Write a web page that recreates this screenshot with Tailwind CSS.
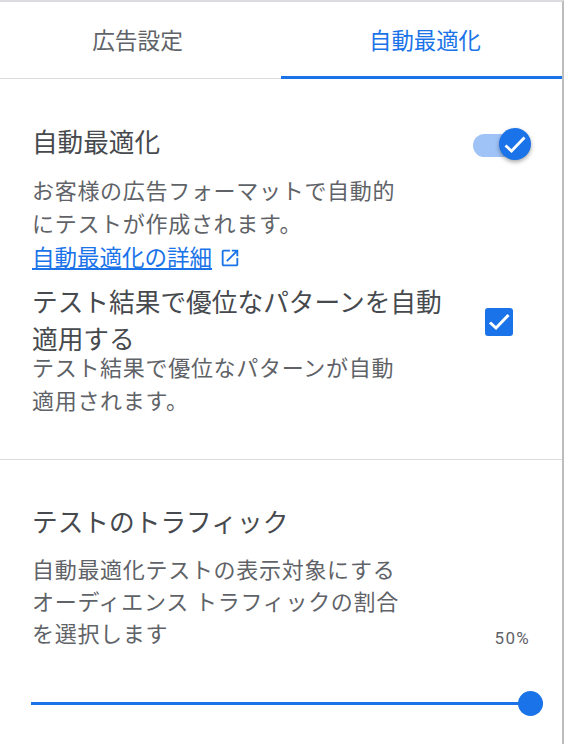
<!DOCTYPE html>
<html lang="ja"><head><meta charset="utf-8"><script src="https://cdn.jsdelivr.net/npm/@tailwindcss/browser@4"></script></head>
<body class="bg-white">
<div class="w-[564px] h-[744px] border-t-2 border-r-2 border-t-[#dadce0] border-r-[#bdbdbd] font-['Roboto','Noto_Sans_CJK_JP',sans-serif] text-[#5f6368] overflow-hidden">
  <div class="flex h-[77px] border-b border-[#dadce0]">
    <div class="w-[281px] pr-[6px] flex items-center justify-center text-[22.7px] pt-[4px] leading-[30px]">広告設定</div>
    <div class="w-[281px] pl-[7px] flex items-center justify-center text-[22.4px] pt-[4px] leading-[30px] text-[#1a73e8] border-b-[3px] border-[#1a73e8] h-[77px]">自動最適化</div>
  </div>
  <section class="h-[381px] border-b border-[#dadce0] pl-[32px] pr-[31px] pt-[46px]">
    <div class="flex justify-between items-center h-[36px]">
      <h2 class="text-[25.6px] leading-[36px] text-[#46494d]">自動最適化</h2>
      <div class="relative w-[58px] h-[34px] mt-[4px]">
        <div class="absolute left-0 top-[6px] w-[46px] h-[23px] rounded-full bg-[#a0c3f7]"></div>
        <div class="absolute right-0 top-0 w-[32px] h-[32px] rounded-full bg-[#1a73e8] shadow-[0_2px_4px_rgba(0,0,0,0.35)] flex items-center justify-center">
          <svg width="24" height="24" viewBox="0 0 24 24" fill="none" stroke="#fff" stroke-width="2.8"><path d="M2.5 13.5l6 5.5L21.5 5.5"/></svg>
        </div>
      </div>
    </div>
    <p class="mt-[14px] w-[372px] text-[22px] leading-[33px] tracking-[0.7px]">お客様の広告フォーマットで自動的にテストが作成されます。</p>
    <div class="flex items-center h-[33px] text-[#1a73e8]">
      <a class="text-[22.5px] leading-[30px] underline underline-offset-[2px]">自動最適化の詳細</a>
      <svg class="ml-[7px]" width="22" height="22" viewBox="0 0 24 24" fill="#1a73e8"><path d="M19 19H5V5h7V3H5c-1.1 0-2 .9-2 2v14c0 1.1.9 2 2 2h14c1.1 0 2-.9 2-2v-7h-2v7zM14 3v2h3.6l-9.8 9.8 1.4 1.4L19 6.4V10h2V3h-7z"/></svg>
    </div>
    <div class="flex justify-between items-center mt-[11px]">
      <h3 class="w-[420px] text-[25.7px] leading-[37px] text-[#46494d]">テスト結果で優位なパターンを自動適用する</h3>
      <div class="w-[28px] h-[28px] mr-[18px] rounded-[3px] bg-[#1a73e8] flex items-center justify-center">
        <svg width="24" height="24" viewBox="0 0 24 24" fill="none" stroke="#fff" stroke-width="3"><path d="M3 12.5l6 5.5L21.5 5"/></svg>
      </div>
    </div>
    <p class="w-[372px] mt-[-7px] text-[22px] leading-[33px] tracking-[0.7px]">テスト結果で優位なパターンが自動適用されます。</p>
  </section>
  <section class="relative pl-[32px] pr-[32px] pt-[45px]">
    <h2 class="text-[25.7px] leading-[36px] text-[#46494d]">テストのトラフィック</h2>
    <p class="mt-[14px] w-[372px] text-[22px] leading-[32px] tracking-[0.7px]">自動最適化テストの表示対象にするオーディエンス トラフィックの割合を選択します</p>
    <div class="absolute right-[32px] top-[166px] text-[17px] tracking-[1.3px] leading-[24px]">50%</div>
    <div class="relative mt-[51px] -ml-[1px] w-[512px] h-[3px] bg-[#1a73e8]">
      <div class="absolute right-0 -top-[11px] w-[25px] h-[25px] rounded-full bg-[#1a73e8]"></div>
    </div>
  </section>
</div>
</body></html>
